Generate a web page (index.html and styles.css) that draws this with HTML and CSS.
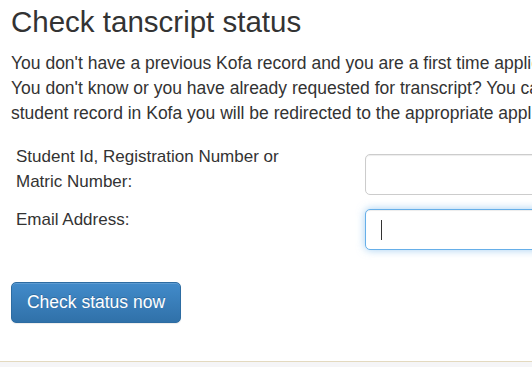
FILE: index.html
```html
<!DOCTYPE html>
<html lang="en">
<head>
<meta charset="utf-8">
<title>Check tanscript status</title>
<link rel="stylesheet" href="styles.css">
</head>
<body>
<main class="page">
  <h2 class="title">Check tanscript status</h2>
  <p class="intro">You don't have a previous Kofa record and you are a first time applicant? Then please register here.<br>You don't know or you have already requested for transcript? You can check the status here. If you have a<br>student record in Kofa you will be redirected to the appropriate application form.</p>
  <form class="form">
    <div class="row row-first">
      <label class="label" for="sid">Student Id, Registration Number or Matric Number:</label>
      <input class="control control-first" id="sid" type="text">
    </div>
    <div class="row row-second">
      <label class="label" for="email">Email Address:</label>
      <div class="control-wrap">
        <input class="control control-focus" id="email" type="email">
        <span class="caret"></span>
      </div>
    </div>
    <button class="btn" type="button">Check status now</button>
  </form>
</main>
<footer class="footer"></footer>
</body>
</html>
```

FILE: styles.css
```css
html, body {
  margin: 0;
  padding: 0;
  overflow: hidden;
  background: #fff;
}

body {
  font-family: "Liberation Sans", Arial, sans-serif;
  color: #333;
  width: 532px;
  height: 367px;
  display: flex;
  flex-direction: column;
}

.page {
  padding: 0 0 0 11px;
}

.title {
  margin: 5px 0 0;
  font-size: 29.5px;
  font-weight: 400;
  line-height: 33px;
  white-space: nowrap;
}

.intro {
  margin: 13px 0 0;
  font-size: 17.5px;
  line-height: 25px;
  white-space: nowrap;
}

.form {
  margin-top: 19px;
  padding-left: 5px;
}

.row {
  display: grid;
  grid-template-columns: 300px 320px;
  column-gap: 49px;
  align-items: start;
}

.row-first {
  margin-bottom: 13px;
}

.label {
  font-size: 17px;
  line-height: 24.5px;
  font-weight: 400;
}

.control {
  display: block;
  box-sizing: border-box;
  width: 320px;
  height: 41px;
  margin: 0;
  padding: 6px 15px;
  font: inherit;
  border: 1px solid #ccc;
  border-radius: 5px;
  background: #fff;
  box-shadow: inset 0 1px 1px rgba(0, 0, 0, 0.075);
  outline: none;
}

.control-first {
  margin-top: 9px;
}

.control-wrap {
  position: relative;
  margin-top: 1px;
}

.control-focus {
  border-color: #66afe9;
  box-shadow: inset 0 1px 1px rgba(0, 0, 0, 0.075), 0 0 8px rgba(102, 175, 233, 0.6);
}

.caret {
  position: absolute;
  left: 16px;
  top: 11px;
  width: 1px;
  height: 20px;
  background: #333;
}

.btn {
  display: block;
  margin: 32px 0 0 -5px;
  box-sizing: border-box;
  width: 170px;
  height: 41px;
  padding: 8px 0;
  font-family: "Liberation Sans", Arial, sans-serif;
  font-size: 17.5px;
  line-height: 23px;
  color: #fff;
  text-align: center;
  background: linear-gradient(to bottom, #428bca 0%, #3071a9 100%);
  border: 1px solid #2d6ca2;
  border-radius: 5px;
  box-shadow: inset 0 1px 0 rgba(255, 255, 255, 0.15), 0 1px 1px rgba(0, 0, 0, 0.075);
  text-shadow: 0 -1px 0 rgba(0, 0, 0, 0.2);
  cursor: pointer;
}

.footer {
  margin-top: 38px;
  flex: 1;
  border-top: 1px solid #e3d9bf;
  background: #f5f5f7;
}
```
